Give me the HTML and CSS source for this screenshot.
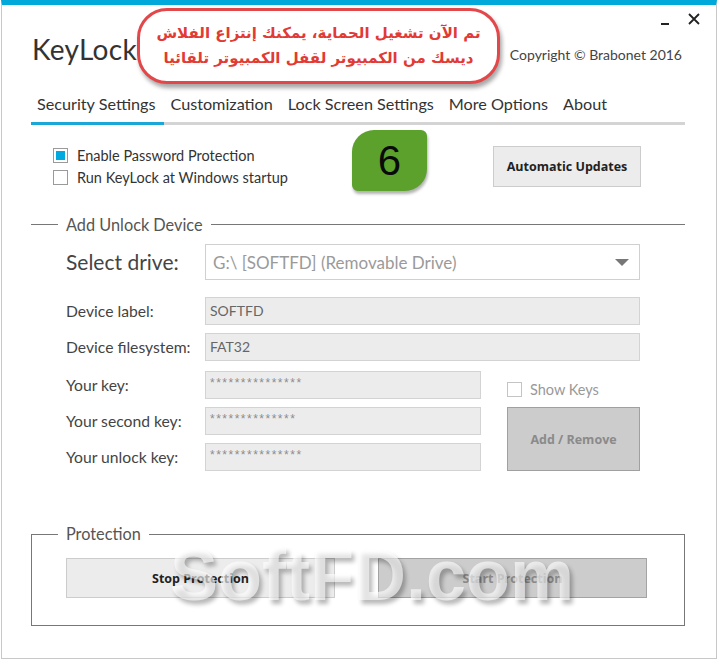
FILE: index.html
```html
<!DOCTYPE html>
<html lang="en">
<head>
  <meta charset="UTF-8" />
  <meta name="viewport" content="width=device-width, initial-scale=1.0" />
  <title>KeyLock</title>
  <link rel="stylesheet" href="styles.css">
</head>
<body>
  <div class="window">
    <div class="header">
      <h1 class="app-title">KeyLock</h1>
      <div class="header-right">
        <div class="win-controls">
          <span class="win-min"></span>
          <svg class="win-close" width="12" height="12" viewBox="0 0 12 12">
            <path d="M1 1 L11 11 M11 1 L1 11" stroke="#222" stroke-width="1.8" />
          </svg>
        </div>
        <div class="copyright">Copyright &copy; Brabonet 2016</div>
      </div>
    </div>

    <div class="callout" dir="rtl" lang="ar">
      تم الآن تشغيل الحماية، يمكنك إنتزاع الفلاش<br>
      ديسك من الكمبيوتر لقفل الكمبيوتر تلقائيا
    </div>

    <nav class="tabs">
      <span class="tab active">Security Settings</span>
      <span class="tab">Customization</span>
      <span class="tab">Lock Screen Settings</span>
      <span class="tab">More Options</span>
      <span class="tab">About</span>
    </nav>

    <div class="content">
      <div class="top-row">
        <div class="checks">
          <label class="check"><span class="box checked"></span>Enable Password Protection</label>
          <label class="check"><span class="box"></span>Run KeyLock at Windows startup</label>
        </div>
        <div class="step-badge">6</div>
        <button class="btn btn-light btn-updates">Automatic Updates</button>
      </div>

      <div class="group-title">Add Unlock Device</div>

      <div class="device-form">
        <div class="lbl lbl-big">Select drive:</div>
        <div class="select wide">
          <span>G:\ [SOFTFD] (Removable Drive)</span>
          <span class="caret"></span>
        </div>

        <div class="lbl">Device label:</div>
        <div class="field wide">SOFTFD</div>

        <div class="lbl">Device filesystem:</div>
        <div class="field wide">FAT32</div>

        <div class="lbl">Your key:</div>
        <div class="field pass">***************</div>
        <label class="check check-dim show-keys"><span class="box"></span>Show Keys</label>

        <div class="lbl">Your second key:</div>
        <div class="field pass">**************</div>
        <button class="btn btn-off add-remove">Add / Remove</button>

        <div class="lbl">Your unlock key:</div>
        <div class="field pass">***************</div>
      </div>

      <div class="protection">
        <div class="protection-legend">Protection</div>
        <div class="protection-buttons">
          <button class="btn btn-light">Stop Protection</button>
          <button class="btn btn-off">Start Protection</button>
        </div>
      </div>
    </div>

    <div class="watermark">SoftFD.com</div>
  </div>
</body>
</html>
```

FILE: styles.css
```css
* {
  box-sizing: border-box;
}

body {
  margin: 0;
  background: #ffffff;
  font-family: Lato, "Noto Sans", sans-serif;
  color: #333333;
}

.window {
  position: relative;
  width: 716px;
  height: 659px;
  margin-left: 1px;
  border-top: 5px solid #00a9d9;
  border-left: 1px solid #c8c8c8;
  border-right: 1px solid #c8c8c8;
  border-bottom: 1px solid #c8c8c8;
}

.header {
  display: flex;
  justify-content: space-between;
  align-items: flex-start;
  height: 86px;
  padding: 0 34px 0 30px;
}

.app-title {
  margin: 27px 0 0 0;
  font-size: 28px;
  font-weight: 400;
  color: #333333;
  letter-spacing: 0.3px;
}

.header-right {
  display: flex;
  flex-direction: column;
  align-items: flex-end;
}

.win-controls {
  display: flex;
  align-items: center;
  gap: 19px;
  margin-top: 8px;
  margin-right: -18px;
}

.win-min {
  display: block;
  width: 8px;
  height: 2px;
  background: #222222;
  margin-top: 10px;
}

.copyright {
  margin-top: 21px;
  font-size: 14px;
  color: #444444;
}

.callout {
  position: absolute;
  left: 135px;
  top: 3px;
  width: 363px;
  height: 76px;
  border: 3px solid #e2474a;
  border-radius: 30px;
  background: #ffffff;
  box-shadow: 2px 4px 4px rgba(0, 0, 0, 0.35);
  font-family: "DejaVu Sans", sans-serif;
  font-weight: bold;
  font-size: 15px;
  line-height: 25px;
  color: #e23a34;
  text-align: center;
  padding-top: 10px;
}

.tabs {
  display: flex;
  margin: 0 31px 0 29px;
  padding-left: 6px;
  gap: 15px;
  border-bottom: 3px solid #d4d4d4;
  font-size: 16.2px;
  color: #333333;
}

.tab {
  padding: 3px 0 9px 0;
}

.tab.active {
  margin-left: -6px;
  padding-left: 6px;
  padding-right: 9px;
  margin-right: -9px;
  border-bottom: 3px solid #1aa6d6;
  margin-bottom: -3px;
}

.content {
  padding: 0 31px 0 29px;
}

.top-row {
  display: flex;
  align-items: flex-start;
  height: 90px;
}

.checks {
  display: flex;
  flex-direction: column;
  gap: 5px;
  margin: 22px 0 0 22px;
  width: 299px;
}

.check {
  display: flex;
  align-items: center;
  font-size: 14.5px;
  color: #333333;
}

.box {
  width: 15px;
  height: 15px;
  border: 1px solid #9a9a9a;
  background: #ffffff;
  margin-right: 9px;
}

.box.checked {
  background: #00a9e0;
  box-shadow: inset 0 0 0 2px #ffffff;
}

.step-badge {
  width: 75px;
  height: 61px;
  margin-top: 5px;
  background: #5ca12b;
  border-radius: 22px 6px 22px 6px;
  box-shadow: 1px 3px 3px rgba(0, 0, 0, 0.3);
  font-family: "Liberation Sans", sans-serif;
  font-size: 42px;
  line-height: 61px;
  text-align: center;
  color: #0a0a0a;
}

.btn {
  font-family: "Open Sans", Lato, sans-serif;
  font-weight: 700;
  font-size: 12.5px;
  border: 1px solid #cccccc;
  background: #ececec;
  color: #222222;
}

.btn-updates {
  width: 148px;
  height: 41px;
  margin: 21px 0 0 66px;
}

.btn-off {
  background: #cccccc;
  border-color: #a3a3a3;
  color: #8a8a8a;
}

.group-title {
  display: flex;
  align-items: center;
  gap: 8px;
  font-size: 16.3px;
  color: #555555;
}

.group-title::before {
  content: "";
  width: 27px;
  border-top: 1px solid #777777;
}

.group-title::after {
  content: "";
  flex: 1;
  border-top: 1px solid #777777;
}

.device-form {
  display: grid;
  grid-template-columns: 139px 276px 26px 133px;
  grid-template-rows: 45px 28px 30px 28px 28px 28px;
  row-gap: 8px;
  margin: 10px 0 0 35px;
}

.lbl {
  grid-column: 1;
  font-size: 15.7px;
  color: #444444;
  align-self: start;
  line-height: 28px;
}

.lbl-big {
  font-size: 21px;
  line-height: 36px;
}

.wide {
  grid-column: 2 / 5;
}

.select {
  display: flex;
  align-items: center;
  justify-content: space-between;
  height: 36px;
  padding: 0 10px 0 7px;
  border: 1px solid #d0d0d0;
  background: #ffffff;
  font-size: 17px;
  color: #9a9a9a;
}

.caret {
  width: 0;
  height: 0;
  border-left: 7px solid transparent;
  border-right: 7px solid transparent;
  border-top: 7px solid #777777;
}

.field {
  height: 28px;
  padding: 0 4px;
  border: 1px solid #d3d3d3;
  background: #ececec;
  font-size: 14px;
  line-height: 26px;
  color: #666666;
}

.field.pass {
  grid-column: 2;
  font-family: "Liberation Sans", sans-serif;
  font-size: 12px;
  line-height: 22px;
  color: #8c8c8c;
  letter-spacing: 1.5px;
}

.show-keys {
  grid-column: 4;
  align-self: center;
  margin-top: 8px;
  color: #999999;
}

.check-dim .box {
  border-color: #c4c4c4;
  margin-right: 8px;
}

.add-remove {
  grid-column: 4;
  grid-row: 5 / 7;
  height: 64px;
  border-color: #a0a0a0;
}

.protection {
  margin-top: 63px;
  height: 92px;
  border: 1px solid #777777;
}

.protection-legend {
  width: fit-content;
  height: 20px;
  margin: -11px 0 0 26px;
  padding: 0 8px;
  background: #ffffff;
  font-size: 16.3px;
  line-height: 20px;
  color: #555555;
}

.protection-buttons {
  display: flex;
  gap: 43px;
  padding: 14px 0 0 34px;
}

.protection-buttons .btn {
  width: 269px;
  height: 40px;
}

.watermark {
  position: absolute;
  left: 168px;
  top: 529px;
  font-family: "Liberation Sans", sans-serif;
  font-weight: bold;
  font-size: 72px;
  color: rgba(255, 255, 255, 0.62);
  text-shadow: 3px 4px 4px rgba(0, 0, 0, 0.28);
  pointer-events: none;
}
```
